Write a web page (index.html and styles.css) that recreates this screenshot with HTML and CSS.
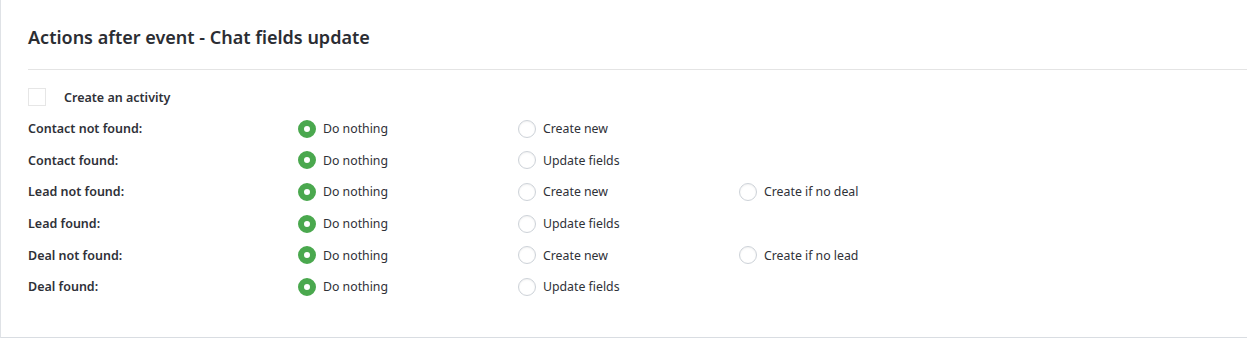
FILE: index.html
```html
<!DOCTYPE html>
<html lang="en">
<head>
    <meta charset="UTF-8">
    <title>Actions after event</title>
    <link rel="stylesheet" href="styles.css">
</head>
<body>
    <div class="card">
        <div class="card-header">
            <h2>Actions after event - Chat fields update</h2>
        </div>
        <label class="activity">
            <input type="checkbox" class="box">
            <span>Create an activity</span>
        </label>
        <div class="rules">
            <div class="rule-name">Contact not found:</div>
            <label class="opt"><input type="radio" name="cnf" checked><span>Do nothing</span></label>
            <label class="opt"><input type="radio" name="cnf"><span>Create new</span></label>
            <div></div>

            <div class="rule-name">Contact found:</div>
            <label class="opt"><input type="radio" name="cf" checked><span>Do nothing</span></label>
            <label class="opt"><input type="radio" name="cf"><span>Update fields</span></label>
            <div></div>

            <div class="rule-name">Lead not found:</div>
            <label class="opt"><input type="radio" name="lnf" checked><span>Do nothing</span></label>
            <label class="opt"><input type="radio" name="lnf"><span>Create new</span></label>
            <label class="opt"><input type="radio" name="lnf"><span>Create if no deal</span></label>

            <div class="rule-name">Lead found:</div>
            <label class="opt"><input type="radio" name="lf" checked><span>Do nothing</span></label>
            <label class="opt"><input type="radio" name="lf"><span>Update fields</span></label>
            <div></div>

            <div class="rule-name">Deal not found:</div>
            <label class="opt"><input type="radio" name="dnf" checked><span>Do nothing</span></label>
            <label class="opt"><input type="radio" name="dnf"><span>Create new</span></label>
            <label class="opt"><input type="radio" name="dnf"><span>Create if no lead</span></label>

            <div class="rule-name">Deal found:</div>
            <label class="opt"><input type="radio" name="df" checked><span>Do nothing</span></label>
            <label class="opt"><input type="radio" name="df"><span>Update fields</span></label>
            <div></div>
        </div>
    </div>
</body>
</html>
```

FILE: styles.css
```css
html, body {
    margin: 0;
    padding: 0;
    background-color: #fff;
    overflow: hidden;
}
body {
    font-family: "Noto Sans", Arial, sans-serif;
    color: #2f3138;
}
.card {
    background-color: #fff;
    border-left: 1px solid #dfe2e6;
    border-bottom: 2px solid #d9dde2;
    margin-right: -28px;
    padding: 0 0 34px 27px;
}
.card-header {
    padding: 25px 0 20px;
    border-bottom: 1px solid #e4e4e4;
}
.card-header h2 {
    margin: 0;
    font-size: 18px;
    line-height: 24px;
    font-weight: 600;
    color: #2b2d33;
}
.activity {
    display: flex;
    align-items: center;
    margin-top: 18px;
    height: 18px;
    font-size: 12.5px;
    font-weight: 600;
}
.box {
    appearance: none;
    width: 18px;
    height: 18px;
    margin: 0 18px 0 0;
    border: 1px solid #e6e6e6;
    background: #fff;
}
.rules {
    display: grid;
    grid-template-columns: 270px 220px 221px 1fr;
    grid-auto-rows: 31.6px;
    margin-top: 7px;
    font-size: 12.5px;
}
.rule-name {
    display: flex;
    align-items: center;
    font-weight: 600;
}
.opt {
    display: flex;
    align-items: center;
    font-size: 12.3px;
}
.opt input {
    appearance: none;
    width: 18px;
    height: 18px;
    margin: 0 7px 0 0;
    border-radius: 50%;
    border: 1px solid #cdd2d8;
    background: #fff;
    box-shadow: inset 0 1px 2px rgba(0, 0, 0, 0.06);
}
.opt input:checked {
    border: 6px solid #4aa84e;
    background: #fff;
    box-shadow: none;
}
```
